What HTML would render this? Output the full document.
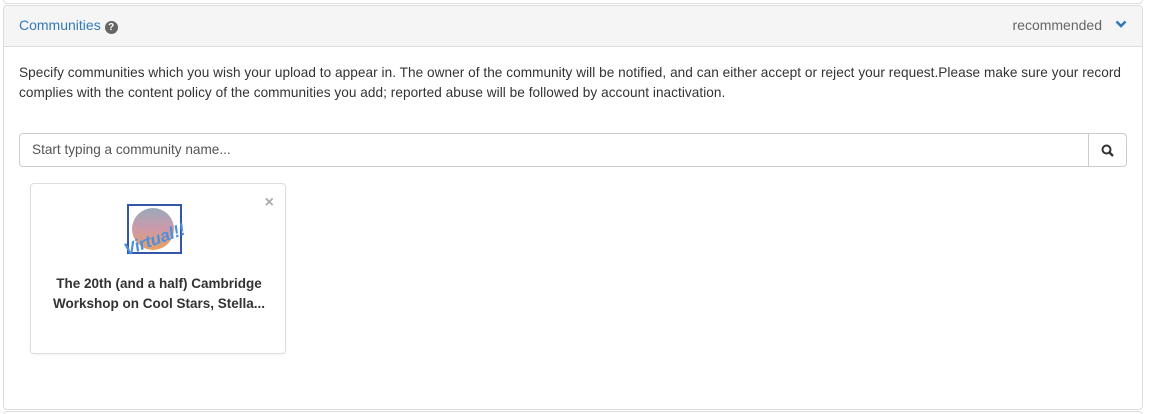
<!DOCTYPE html>
<html><head><style>
html,body{margin:0;width:1150px;height:414px;overflow:hidden}
body{background:#fff;font-family:"Liberation Sans",sans-serif;color:#333;position:relative}
.prev{position:absolute;left:3px;top:-10px;width:1138px;height:12px;border:1px solid #ddd;border-radius:4px}
.next{position:absolute;left:3px;top:411px;width:1138px;height:20px;border:1px solid #ddd;border-radius:4px}
.panel{position:absolute;left:3px;top:5px;width:1138px;height:403px;border:1px solid #ddd;border-radius:4px;overflow:hidden}
.head{height:40px;background:#f5f5f5;border-bottom:1px solid #ddd;position:relative}
.title{position:absolute;left:15px;top:11px;font-size:14px;color:#337ab7}
.q{display:inline-block;width:13px;height:13px;border-radius:50%;background:#666;color:#fff;font-size:10px;font-weight:bold;text-align:center;line-height:13px;vertical-align:0px;margin-left:4px}
.rec{position:absolute;right:40px;top:11px;font-size:14px;color:#666}
.chev{position:absolute;right:15px;top:13px}
.desc{position:absolute;left:15px;top:57px;font-size:13.6px;line-height:20px;width:1112px;letter-spacing:0.05px}
.inp{position:absolute;left:15px;top:127px;font-size:13.6px;color:#555;line-height:32px;padding-left:12px;box-sizing:border-box;width:1070px;height:34px;border:1px solid #ccc;border-radius:4px 0 0 4px}
.btn{position:absolute;left:1084px;top:127px;width:39px;height:34px;border:1px solid #ccc;border-radius:0 4px 4px 0;box-sizing:border-box}
.card{position:absolute;left:26px;top:177px;width:256px;height:171px;border:1px solid #ddd;border-radius:4px;box-sizing:border-box;box-shadow:0 1px 2px rgba(0,0,0,.05)}
.x{position:absolute;right:11px;top:10px;color:#aaa;font-size:16px;font-weight:bold}
.img{position:absolute;left:96px;top:20px;width:51px;height:46px;border:2px solid #3355aa}
.circ{position:absolute;left:3px;top:2px;width:42px;height:42px;border-radius:50%;background:linear-gradient(#9ab 0%,#c9a 50%,#e9a060 100%)}
.virt{position:absolute;left:-6px;top:24px;color:#4a8fe0;font-size:17px;transform:rotate(-20deg);font-style:italic;font-weight:bold}
.name{position:absolute;left:-10px;width:276px;top:90px;text-align:center;font-weight:bold;font-size:13.5px;line-height:20px;color:#333}
</style></head><body>
<div class="prev"></div>
<div class="panel">
 <div class="head">
  <span class="title">Communities<span class="q">?</span></span>
  <span class="rec">recommended</span>
  <svg class="chev" width="12" height="10" viewBox="0 0 12 10"><path d="M1.5 2.5 L6 7 L10.5 2.5" stroke="#337ab7" stroke-width="2.6" fill="none"/></svg>
 </div>
 <div class="desc">Specify communities which you wish your upload to appear in. The owner of the community will be notified, and can either accept or reject your request.Please make sure your record complies with the content policy of the communities you add; reported abuse will be followed by account inactivation.</div>
 <div class="inp">Start typing a community name...</div>
 <div class="btn"><svg style="position:absolute;left:12px;top:10px" width="14" height="14" viewBox="0 0 14 14"><circle cx="5.5" cy="5.5" r="4" stroke="#333" stroke-width="2" fill="none"/><path d="M8.5 8.5 L12 12" stroke="#333" stroke-width="2.4"/></svg></div>
 <div class="card">
  <span class="x">×</span>
  <div class="img"><div class="circ"></div><span class="virt">Virtual!!</span></div>
  <div class="name">The 20th (and a half) Cambridge<br>Workshop on Cool Stars, Stella...</div>
 </div>
</div>
<div class="next"></div>
</body></html>
